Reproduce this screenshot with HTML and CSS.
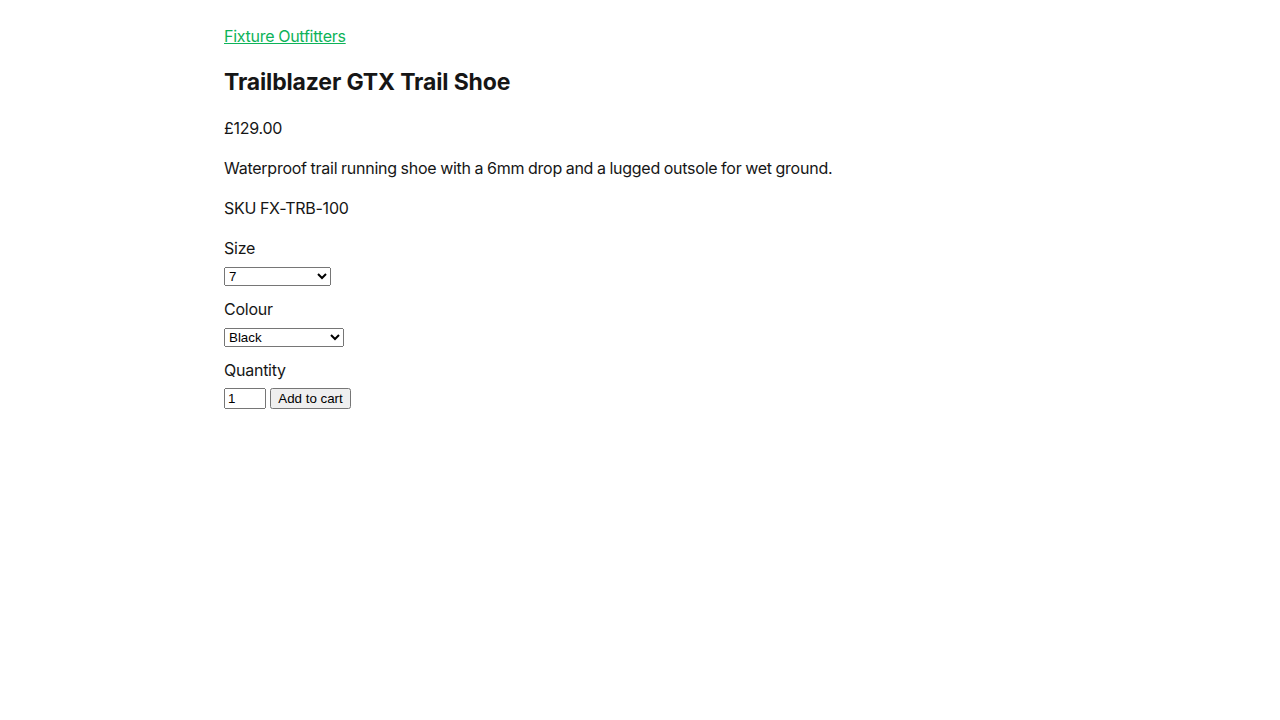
FILE: index.html
```html
<!DOCTYPE html>
<html lang="en">
<head>
<meta charset="utf-8">
<title>Trailblazer GTX Trail Shoe</title>
<link rel="stylesheet" href="styles.css">
</head>
<body>
<main class="page">
  <a class="brand" href="#">Fixture Outfitters</a>
  <h1 class="title">Trailblazer GTX Trail Shoe</h1>
  <p class="text">£129.00</p>
  <p class="text">Waterproof trail running shoe with a 6mm drop and a lugged outsole for wet ground.</p>
  <p class="text">SKU FX-TRB-100</p>
  <form class="form">
    <div class="field">
      <label class="label" for="size">Size</label>
      <div class="control"><select id="size" class="select-size">
        <option>7</option><option>8</option><option>9</option><option>10</option><option>11</option>
      </select></div>
    </div>
    <div class="field">
      <label class="label" for="colour">Colour</label>
      <div class="control"><select id="colour" class="select-colour">
        <option>Black</option><option>Slate Grey</option><option>Forest Green</option>
      </select></div>
    </div>
    <div class="field field-last">
      <label class="label" for="qty">Quantity</label>
      <div class="control row"><input id="qty" class="qty" type="number" value="1" min="1"><button type="button" class="btn">Add to cart</button></div>
    </div>
  </form>
</main>
</body>
</html>
```
FILE: styles.css
```css
html, body {
  margin: 0;
  padding: 0;
  background: #fff;
}
body {
  font-family: Inter, "Noto Sans", sans-serif;
  font-size: 16px;
  line-height: 24px;
  color: #161616;
  letter-spacing: -0.25px;
  word-spacing: -0.5px;
}
.page {
  max-width: 832px;
  margin: 0 auto;
  padding-top: 24px;
}
.brand {
  color: #0db359;
  text-decoration: underline;
  display: inline-block;
}
.title {
  font-size: 23px;
  line-height: 36px;
  font-weight: 700;
  letter-spacing: -0.15px;
  word-spacing: 0;
  margin: 16px 0 0;
  color: #161616;
}
.text {
  margin: 16px 0 0;
}
.form {
  margin-top: 16px;
  display: flex;
  flex-direction: column;
  gap: 11px;
}
.field {
  display: flex;
  flex-direction: column;
  gap: 7px;
}
.field-last {
  gap: 6px;
}
.label {
  display: block;
}
.control {
  line-height: 0;
  display: flex;
}
.row {
  gap: 4px;
}
select, input, button {
  font-family: "Liberation Sans", Arial, sans-serif;
  font-size: 13.33px;
  letter-spacing: 0;
  word-spacing: 0;
  margin: 0;
}
.select-size {
  width: 107px;
  height: 19px;
}
.select-colour {
  width: 120px;
  height: 19px;
}
.qty {
  width: 42px;
  height: 21px;
  box-sizing: border-box;
  padding: 1px 2px;
}
.btn {
  width: 81px;
  height: 21px;
  box-sizing: border-box;
  padding: 1px 6px;
}
```
